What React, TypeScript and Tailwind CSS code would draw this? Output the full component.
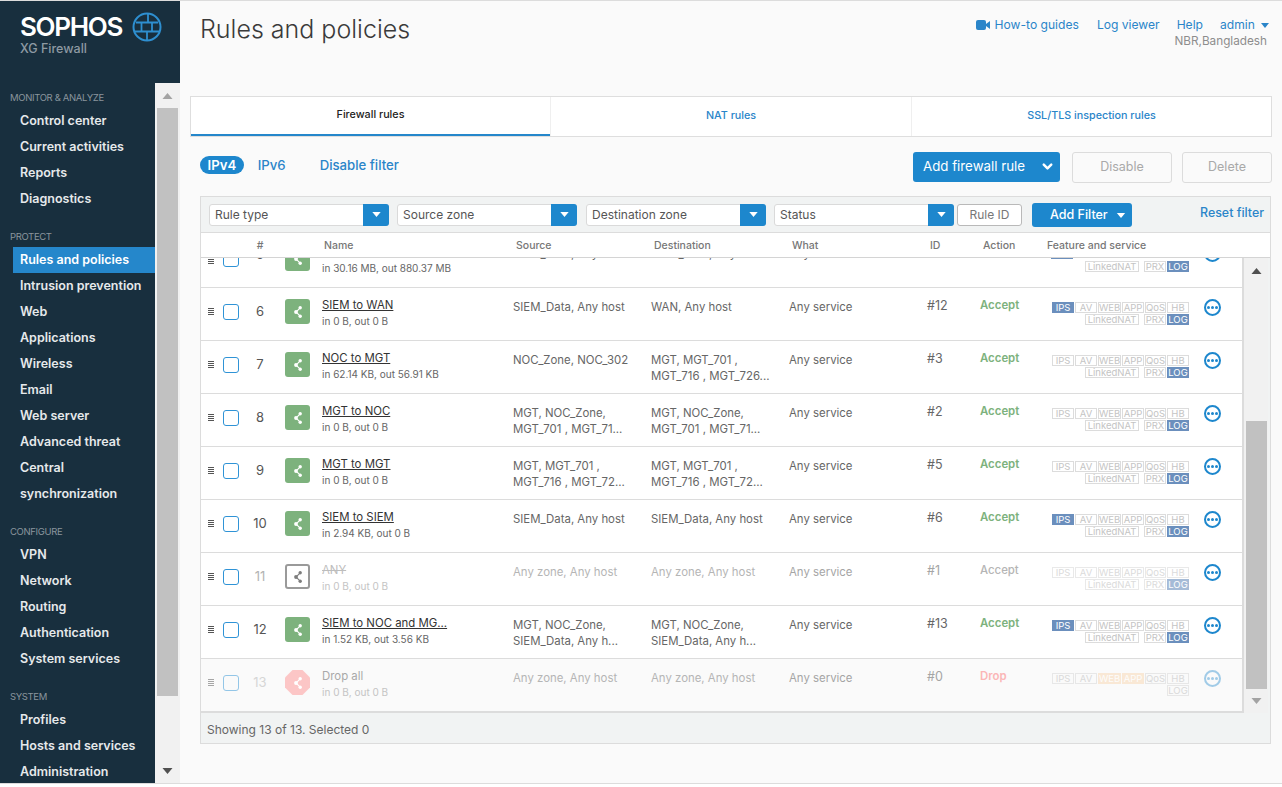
import { ChevronDown } from "lucide-react";

const font = { fontFamily: "Inter, 'Liberation Sans', sans-serif" };

const navSections = [
  { label: "MONITOR & ANALYZE", items: ["Control center", "Current activities", "Reports", "Diagnostics"] },
  {
    label: "PROTECT",
    items: ["Rules and policies", "Intrusion prevention", "Web", "Applications", "Wireless", "Email", "Web server", "Advanced threat", "Central", "synchronization"],
  },
  { label: "CONFIGURE", items: ["VPN", "Network", "Routing", "Authentication", "System services"] },
  { label: "SYSTEM", items: ["Profiles", "Hosts and services", "Administration"] },
];

type Rule = {
  n: number;
  name: string;
  traffic: string;
  source: string[];
  dest: string[];
  id: string;
  action: string;
  ips?: boolean;
  state?: "on" | "off" | "drop";
};

const rules: Rule[] = [
  { n: 6, name: "SIEM to WAN", traffic: "in 0 B, out 0 B", source: ["SIEM_Data, Any host"], dest: ["WAN, Any host"], id: "#12", action: "Accept", ips: true },
  { n: 7, name: "NOC to MGT", traffic: "in 62.14 KB, out 56.91 KB", source: ["NOC_Zone, NOC_302"], dest: ["MGT, MGT_701 ,", "MGT_716 , MGT_726..."], id: "#3", action: "Accept" },
  { n: 8, name: "MGT to NOC", traffic: "in 0 B, out 0 B", source: ["MGT, NOC_Zone,", "MGT_701 , MGT_71..."], dest: ["MGT, NOC_Zone,", "MGT_701 , MGT_71..."], id: "#2", action: "Accept" },
  { n: 9, name: "MGT to MGT", traffic: "in 0 B, out 0 B", source: ["MGT, MGT_701 ,", "MGT_716 , MGT_72..."], dest: ["MGT, MGT_701 ,", "MGT_716 , MGT_72..."], id: "#5", action: "Accept" },
  { n: 10, name: "SIEM to SIEM", traffic: "in 2.94 KB, out 0 B", source: ["SIEM_Data, Any host"], dest: ["SIEM_Data, Any host"], id: "#6", action: "Accept", ips: true },
  { n: 11, name: "ANY", traffic: "in 0 B, out 0 B", source: ["Any zone, Any host"], dest: ["Any zone, Any host"], id: "#1", action: "Accept", state: "off" },
  { n: 12, name: "SIEM to NOC and MG...", traffic: "in 1.52 KB, out 3.56 KB", source: ["MGT, NOC_Zone,", "SIEM_Data, Any h..."], dest: ["MGT, NOC_Zone,", "SIEM_Data, Any h..."], id: "#13", action: "Accept", ips: true },
  { n: 13, name: "Drop all", traffic: "in 0 B, out 0 B", source: ["Any zone, Any host"], dest: ["Any zone, Any host"], id: "#0", action: "Drop", state: "drop" },
];

function Caret({ className }: { className: string }) {
  return (
    <svg viewBox="0 0 10 6" className={className} fill="currentColor">
      <path d="M0 0h10L5 6z" />
    </svg>
  );
}

function Logo() {
  return (
    <div className="h-[82px] bg-[#182f3e] pl-[20px] pt-[11px]">
      <div className="flex items-center gap-[10px]">
        <span className="w-[102px] text-[26px] leading-[30px] font-semibold text-white tracking-[-1.3px] whitespace-nowrap">SOPHOS</span>
        <svg viewBox="0 0 30 30" className="w-[30px] h-[30px] text-[#2e8fd0]" fill="none" stroke="currentColor" strokeWidth="2">
          <circle cx="15" cy="15" r="13.5" />
          <path d="M4 10.5h22M2.5 19.5h25M9.5 10.5v9M20 10.5v9M16 2v8.5M15 19.5v8.5" strokeWidth="1.8" />
        </svg>
      </div>
      <div className="text-[12.5px] leading-[16px] text-[#8e9aa3] mt-[-1px] font-medium">XG Firewall</div>
    </div>
  );
}

function Sidebar() {
  return (
    <div className="w-[180px] shrink-0 flex flex-col h-[782px]">
      <Logo />
      <div className="flex flex-1 min-h-0 bg-[#182f3e]">
        <nav className="w-[155px] overflow-hidden pt-[7px]">
          {navSections.map((s) => (
            <div key={s.label} className="mb-[17px]">
              <div className="pl-[10px] h-[16px] leading-[16px] text-[9.5px] tracking-[-0.35px] text-[#8a959d] mb-[2px]">{s.label}</div>
              {s.items.map((item) => (
                <div
                  key={item}
                  className={`ml-[13px] pl-[7px] h-[26px] leading-[26px] text-[12.5px] font-semibold text-[#e6e9eb] ${item === "Rules and policies" ? "bg-[#2587cb] text-white" : ""}`}
                >
                  {item}
                </div>
              ))}
            </div>
          ))}
        </nav>
        <div className="w-[25px] bg-[#f1f1f1] flex flex-col items-center">
          <div className="h-[25px] flex items-center justify-center">
            <Caret className="w-[11px] h-[6px] rotate-180 text-[#a3a3a3]" />
          </div>
          <div className="w-[21px] h-[588px] bg-[#c1c1c1]" />
          <div className="flex-1 flex items-end pb-[9px]">
            <Caret className="w-[11px] h-[6px] text-[#505050]" />
          </div>
        </div>
      </div>
    </div>
  );
}

function TopBar() {
  return (
    <div className="h-[95px] flex justify-between pr-[10px] pt-[11px] pl-[20px]">
      <h1 className="text-[25px] leading-[34px] font-light text-[#3a3a3a]">Rules and policies</h1>
      <div className="flex flex-col items-end pt-[5px] pr-[3px] text-[12.1px] leading-[16px]">
        <div className="flex items-center text-[#2a85c9]">
          <svg viewBox="0 0 14 10" className="w-[14px] h-[10px] mr-[5px]" fill="currentColor">
            <rect x="0" y="0" width="10" height="10" rx="2" />
            <path d="M10 4l4-3v8l-4-3z" />
          </svg>
          <span>How-to guides</span>
          <span className="ml-[18px]">Log viewer</span>
          <span className="ml-[17px]">Help</span>
          <span className="ml-[17px] w-[37px]">admin</span>
          <Caret className="w-[8px] h-[5px] ml-[4px]" />
        </div>
        <div className="pr-[2px] text-[11.75px] text-[#8d8d8d]">NBR,Bangladesh</div>
      </div>
    </div>
  );
}

function Tabs() {
  return (
    <div className="mr-[10px] h-[41px] grid grid-cols-[359px_361px_1fr] bg-white border border-[#dedede] text-[10.75px]">
      <div className="border-b-2 border-[#2587cb] flex items-center justify-center text-[#222] font-medium">Firewall rules</div>
      <div className="border-l border-[#efefef] pb-[1px] flex items-center justify-center text-[#2a85c9] font-medium">NAT rules</div>
      <div className="border-l border-[#efefef] pb-[1px] flex items-center justify-center text-[#2a85c9] font-medium">SSL/TLS inspection rules</div>
    </div>
  );
}

function Toolbar() {
  return (
    <div className="h-[59px] mr-[10px] pl-[10px] flex items-center justify-between text-[13.2px]">
      <div className="flex items-center font-medium text-[#2a85c9] pb-[2px]">
        <span className="h-[18px] leading-[18px] px-[7.5px] rounded-full bg-[#1d87cd] text-white font-semibold">IPv4</span>
        <span className="ml-[14px]">IPv6</span>
        <span className="ml-[34px]">Disable filter</span>
      </div>
      <div className="flex items-center">
        <div className="w-[147px] h-[30px] rounded-[3px] bg-[#1d87cd] text-white text-[13.3px] flex items-center justify-between pl-[10px] pr-[5px]">
          Add firewall rule
          <ChevronDown size={15} strokeWidth={4} />
        </div>
        <div className="ml-[12px] mt-[1px] w-[100px] h-[31px] rounded-[3px] border border-[#dcdcdc] text-[#a9a9a9] text-[12.5px] flex items-center justify-center">Disable</div>
        <div className="ml-[10px] mt-[1px] w-[90px] h-[31px] rounded-[3px] border border-[#dcdcdc] text-[#a9a9a9] text-[12.5px] flex items-center justify-center">Delete</div>
      </div>
    </div>
  );
}

function Select({ label, className = "" }: { label: string; className?: string }) {
  return (
    <div className={`h-[22px] w-[180px] flex rounded-[3px] border border-[#dadada] bg-white ${className}`}>
      <div className="flex-1 pl-[5px] text-[12px] leading-[20px] text-[#555]">{label}</div>
      <div className="w-[26px] -my-[1px] -mr-[1px] bg-[#1d87cd] rounded-r-[3px] flex items-center justify-center">
        <Caret className="w-[9px] h-[5px] text-white" />
      </div>
    </div>
  );
}

function FilterBar() {
  return (
    <div className="h-[36px] bg-[#f1f3f3] border-b border-[#dcdcdc] flex items-center pl-[8px] relative">
      <div className="flex gap-[8px]">
        <Select label="Rule type" />
        <Select label="Source zone" />
        <Select label="Destination zone" className="ml-[1px]" />
        <Select label="Status" />
      </div>
      <div className="ml-[3px] w-[65px] h-[22px] rounded-[3px] border border-[#b9b9b9] bg-white text-[12px] leading-[20px] text-[#777] text-center">Rule ID</div>
      <div className="ml-[10px] mt-[1px] w-[100px] h-[24px] rounded-[3px] bg-[#1d87cd] text-white text-[12.5px] font-medium flex items-center pl-[18px] gap-[8px]">
        Add Filter
        <Caret className="w-[10px] h-[5px]" />
      </div>
      <span className="absolute right-[6px] top-[7px] text-[12.4px] font-medium text-[#2a85c9]">Reset filter</span>
    </div>
  );
}

function ColumnHeader() {
  return (
    <div className="h-[25px] pt-[1px] bg-white border-b border-[#d4d4d4] flex items-center text-[10.5px] font-medium text-[#777]">
      <span className="ml-[49px] w-[20px] text-center">#</span>
      <span className="ml-[54px] w-[192px]">Name</span>
      <span className="w-[138px]">Source</span>
      <span className="w-[138px]">Destination</span>
      <span className="w-[138px]">What</span>
      <span className="w-[53px]">ID</span>
      <span className="w-[64px]">Action</span>
      <span>Feature and service</span>
    </div>
  );
}

function ShareGlyph({ color }: { color: string }) {
  return (
    <svg viewBox="0 0 8 12" className="w-[8px] h-[12px]" fill={color} stroke={color} strokeWidth="1.1">
      <path d="M6.2 1.8L2 6l4.2 4.2" fill="none" />
      <circle cx="2" cy="6" r="1.9" stroke="none" />
      <circle cx="6.2" cy="1.8" r="1.7" stroke="none" />
      <circle cx="6.2" cy="10.2" r="1.7" stroke="none" />
    </svg>
  );
}

function ShareIcon({ state }: { state: Rule["state"] }) {
  return (
    <div
      className={`w-[25px] h-[25px] flex items-center justify-center ${
        state === "off"
          ? "bg-white border-2 border-[#9a9a9a] rounded-[3px]"
          : state === "drop"
            ? "bg-[#fcc6c6] [clip-path:polygon(30%_0,70%_0,100%_30%,100%_70%,70%_100%,30%_100%,0_70%,0_30%)]"
            : "bg-[#7db27d] rounded-[3px]"
      }`}
    >
      <ShareGlyph color={state === "off" ? "#7d7d7d" : "#ffffff"} />
    </div>
  );
}

function Badge({ label, width, tone }: { label: string; width: string; tone: "plain" | "blue" | "orange" }) {
  const cls =
    tone === "blue"
      ? "bg-[#6b8fbd] border-[#6b8fbd] text-white"
      : tone === "orange"
        ? "bg-[#f9ddbd] border-[#f9ddbd] text-white"
        : "border-[#dcdcdc] text-[#c4c4c4]";
  return <span className={`h-[11px] leading-[9px] text-[9.5px] text-center border whitespace-nowrap overflow-hidden ${width} ${cls}`}>{label}</span>;
}

function Features({ rule }: { rule: Rule }) {
  const drop = rule.state === "drop";
  return (
    <div className="w-[138px] flex flex-col items-end gap-[1px]">
      <div className="flex gap-[1px]">
        <Badge label="IPS" width="w-[22px]" tone={rule.ips ? "blue" : "plain"} />
        <Badge label="AV" width="w-[22px]" tone="plain" />
        <Badge label="WEB" width="w-[23px]" tone={drop ? "orange" : "plain"} />
        <Badge label="APP" width="w-[22px]" tone={drop ? "orange" : "plain"} />
        <Badge label="QoS" width="w-[21px]" tone="plain" />
        <Badge label="HB" width="w-[22px]" tone="plain" />
      </div>
      <div className="flex gap-[1px]">
        {!drop && <Badge label="LinkedNAT" width="w-[54px] mr-[4px]" tone="plain" />}
        {!drop && <Badge label="PRX" width="w-[22px]" tone="plain" />}
        <Badge label="LOG" width="w-[22px]" tone={drop ? "plain" : "blue"} />
      </div>
    </div>
  );
}

function MoreButton() {
  return (
    <div className="w-[17px] h-[17px] rounded-full border-2 border-[#1d87cd] flex items-center justify-center gap-[1px]">
      <i className="w-[3px] h-[3px] rounded-full bg-[#1d87cd]" />
      <i className="w-[3px] h-[3px] rounded-full bg-[#1d87cd]" />
      <i className="w-[3px] h-[3px] rounded-full bg-[#1d87cd]" />
    </div>
  );
}

function Handle() {
  return (
    <div className="w-[6px] flex flex-col gap-[1px]">
      <i className="h-[1px] bg-[#555]" />
      <i className="h-[1px] bg-[#555]" />
      <i className="h-[1px] bg-[#555]" />
      <i className="h-[1px] bg-[#555]" />
    </div>
  );
}

function RuleRow({ rule }: { rule: Rule }) {
  const off = rule.state === "off";
  const drop = rule.state === "drop";
  const muted = off || drop;
  return (
    <div className={`h-[53px] border-t border-[#dcdcdc] flex text-[11.4px] ${drop ? "bg-[#fafafa]" : "bg-white"}`}>
      <div className={`${drop ? "opacity-50" : ""} w-[84px] flex items-start pt-[15px] pl-[7px] shrink-0`}>
        <div className="mt-[5px]">
          <Handle />
        </div>
        <div className="ml-[9px] mt-[1px] w-[16px] h-[16px] rounded-[3px] border border-[#2f93d6]" />
        <span className={`ml-[14px] w-[14px] text-center leading-[16px] text-[13px] ${muted ? "text-[#b3b3b3]" : "text-[#555]"}`}>{rule.n}</span>
      </div>
      <div className="pt-[11px] w-[37px] shrink-0">
        <ShareIcon state={rule.state} />
      </div>
      <div className="w-[191px] pt-[8px] shrink-0">
        <div className={`leading-[18px] ${off ? "text-[#bdbdbd] line-through" : drop ? "text-[#a9a9a9]" : "text-[#333] underline"}`}>{rule.name}</div>
        <div className={`leading-[14px] text-[10px] ${muted ? "text-[#c4c4c4]" : "text-[#666]"}`}>{rule.traffic}</div>
      </div>
      {[rule.source, rule.dest, ["Any service"]].map((lines, i) => (
        <div key={i} className={`w-[138px] pt-[12px] shrink-0 leading-[15px] ${muted && i < 2 ? "text-[#b5b5b5]" : muted ? "text-[#a5a5a5]" : "text-[#666]"}`}>
          {lines.map((l) => (
            <div key={l} className={lines.length > 1 ? "mb-[1px]" : ""}>{l}</div>
          ))}
        </div>
      ))}
      <div className={`w-[53px] pt-[9px] shrink-0 leading-[18px] text-[12.5px] ${muted ? "text-[#a5a5a5]" : "text-[#666]"}`}>{rule.id}</div>
      <div className={`w-[71px] pt-[8px] shrink-0 leading-[18px] ${off ? "text-[#b5b5b5] font-medium" : drop ? "text-[#fbb6b6] font-semibold" : "text-[#7db27d] font-semibold"}`}>{rule.action}</div>
      <div className={`pt-[14px] shrink-0 ${muted ? "opacity-60" : ""}`}>
        <Features rule={rule} />
      </div>
      <div className={`pl-[15px] pt-[11px] ${drop ? "opacity-40" : ""}`}>
        <MoreButton />
      </div>
    </div>
  );
}

function PartialRow() {
  return (
    <div className="h-[29px] bg-white overflow-hidden flex text-[10px] text-[#666] relative">
      <div className="absolute left-[7px] -top-[1px]">
        <Handle />
      </div>
      <div className="absolute left-[22px] -top-[7px] w-[16px] h-[16px] rounded-[3px] border border-[#2f93d6]" />
      <span className="absolute left-[52px] -top-[13px] w-[14px] text-center leading-[18px] text-[13px] text-[#555]">5</span>
      <div className="absolute left-[84px] -top-[12px] w-[25px] h-[25px] rounded-[3px] bg-[#7db27d] flex items-center justify-center">
        <ShareGlyph color="#ffffff" />
      </div>
      <span className="absolute left-[121px] top-[3px] leading-[14px]">in 30.16 MB, out 880.37 MB</span>
      <span className="absolute left-[312px] -top-[11px] leading-[15px] text-[11.4px]">SIEM_Data, Any host</span>
      <span className="absolute left-[450px] -top-[11px] leading-[15px] text-[11.4px]">SIEM_Data, Any host</span>
      <span className="absolute left-[588px] -top-[11px] leading-[15px] text-[11.4px]">Any service</span>
      <div className="absolute left-[850px] -top-[10px] flex gap-[1px]">
        <Badge label="" width="w-[22px]" tone="blue" />
      </div>
      <div className="absolute left-[884px] top-[3px] flex gap-[1px]">
        <Badge label="LinkedNAT" width="w-[54px] mr-[4px]" tone="plain" />
        <Badge label="PRX" width="w-[22px]" tone="plain" />
        <Badge label="LOG" width="w-[22px]" tone="blue" />
      </div>
      <div className="absolute left-[1003px] -top-[13px]">
        <MoreButton />
      </div>
    </div>
  );
}

function TableScrollbar() {
  return (
    <div className="w-[24px] shrink-0 bg-[#f1f1f1] flex flex-col items-center">
      <div className="h-[16px] w-full flex items-end justify-center">
        <Caret className="w-[11px] h-[6px] rotate-180 text-[#505050]" />
      </div>
      <div className="mt-[147px] w-[21px] h-[268px] bg-[#c1c1c1]" />
      <div className="flex-1 flex items-center justify-center">
        <Caret className="w-[11px] h-[6px] text-[#a3a3a3]" />
      </div>
    </div>
  );
}

function RulesTable() {
  return (
    <div className="mr-[11px] ml-[10px] border border-[#dcdcdc] bg-[#f1f3f3]">
      <FilterBar />
      <ColumnHeader />
      <div className="flex h-[455px] bg-[#f1f3f3]">
        <div className="w-[1043px] shrink-0 overflow-hidden border-r-2 border-[#dcdcdc] border-b-2">
          <PartialRow />
          {rules.map((r) => (
            <RuleRow key={r.n} rule={r} />
          ))}
        </div>
        <TableScrollbar />
      </div>
      <div className="h-[30px] pl-[6px] text-[12px] leading-[33px] text-[#666]">Showing 13 of 13. Selected 0</div>
    </div>
  );
}

export default function App() {
  return (
    <div className="w-[1282px] h-[787px] overflow-hidden bg-white" style={font}>
      <div className="h-[783px] flex bg-[#fafafa] border-t border-[#dcdcdc]">
        <Sidebar />
        <main className="flex-1 min-w-0">
          <TopBar />
          <div className="pl-[10px]">
            <Tabs />
            <Toolbar />
            <RulesTable />
          </div>
        </main>
      </div>
      <div className="border-t border-[#dcdcdc] h-[3px]" />
    </div>
  );
}
